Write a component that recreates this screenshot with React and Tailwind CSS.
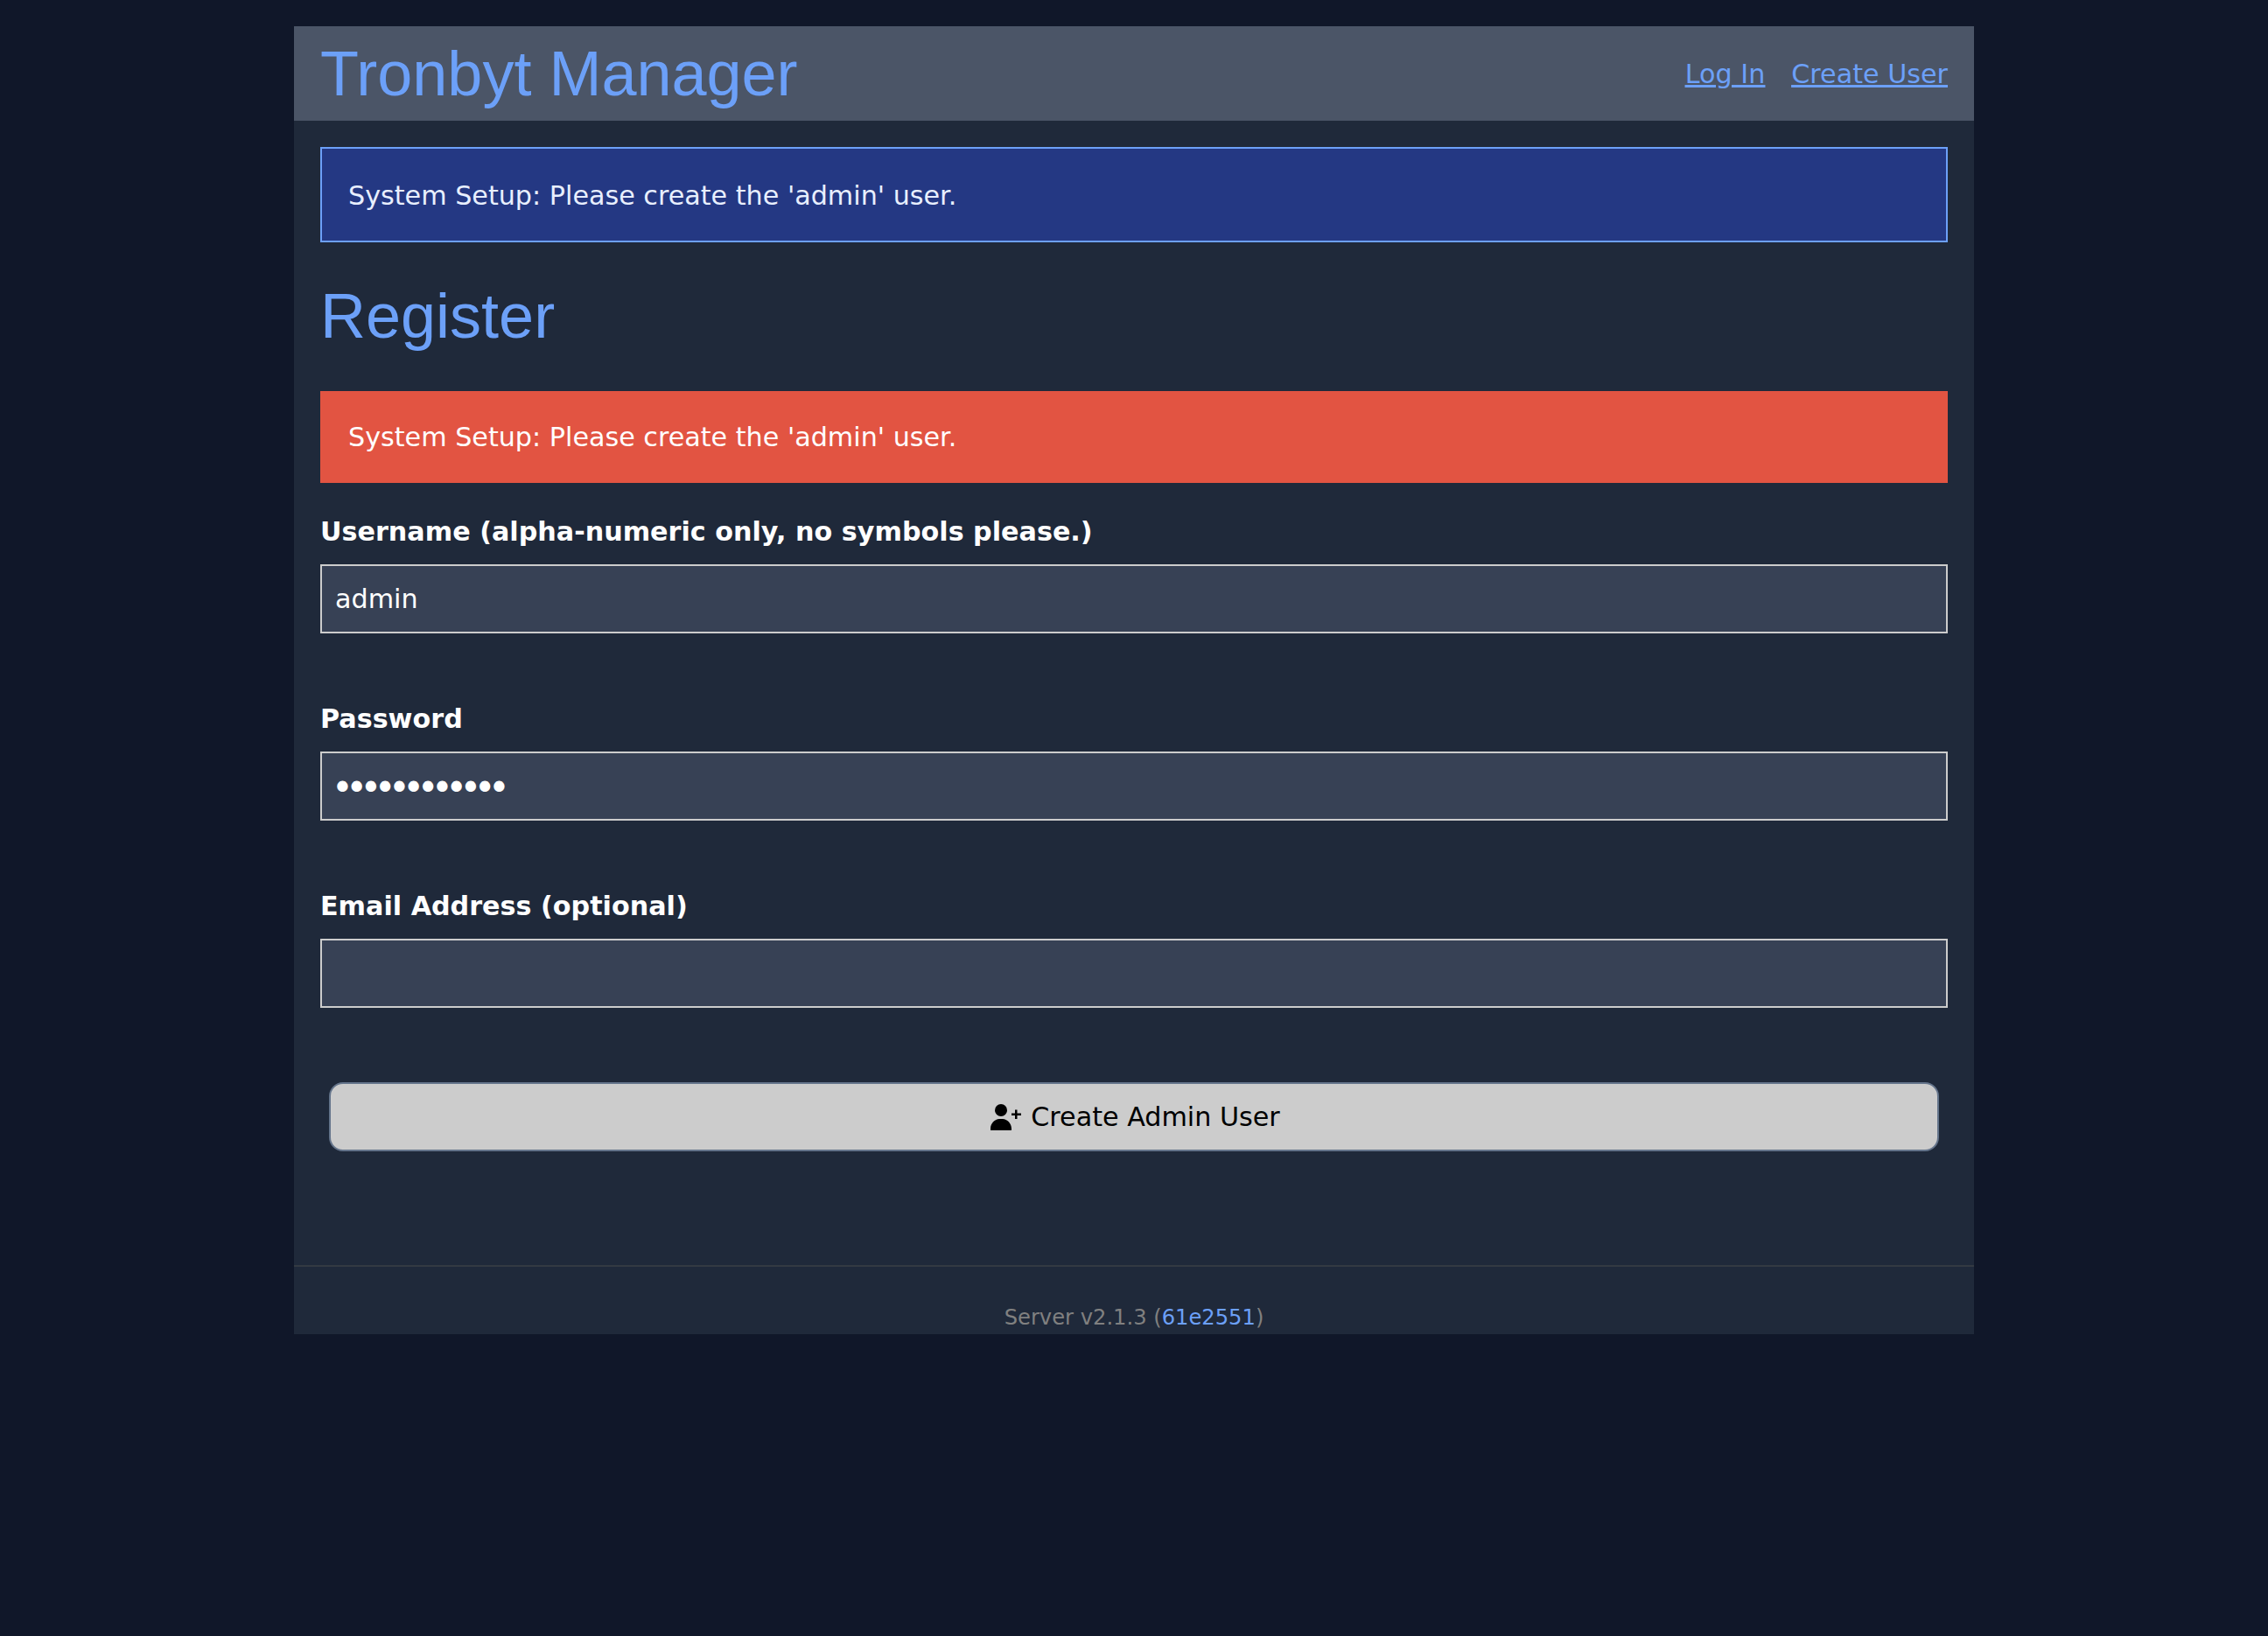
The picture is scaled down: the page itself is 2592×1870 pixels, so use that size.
import React from "react";

const body = "font-['DejaVu_Sans','Verdana',sans-serif]";
const heading = "font-['Liberation_Sans','Arial',sans-serif]";

function Field({ label, value, password }) {
  return (
    <div className="mb-[79px]">
      <label className="block h-[38px] mb-[18px] text-[30.2px] leading-[38px] font-bold text-white">{label}</label>
      <input
        type={password ? "password" : "text"}
        defaultValue={value}
        className={
          password
            ? `block h-[79px] w-full border-2 border-[#cccccc] bg-[#374155] pl-[11px] pt-[3px] text-[42px] tracking-[-8.5px] text-white outline-none ${body}`
            : `block h-[79px] w-full border-2 border-[#cccccc] bg-[#374155] px-[15px] text-[30.2px] text-white outline-none ${body}`
        }
      />
    </div>
  );
}

export default function App() {
  return (
    <div className={`min-h-[1870px] bg-[#101729] pt-[30px] ${body}`}>
      <div className="mx-auto w-[1920px] bg-[#1f293a]">
        <header className="flex h-[108px] items-center justify-between bg-[#4b5567] px-[30px]">
          <h1 className={`text-[72px] leading-[108px] font-normal text-[#6ca0f8] ${heading}`}>Tronbyt Manager</h1>
          <nav className="mt-[2px] flex gap-[30px] text-[30.2px] text-[#6ca0f8] underline">
            <a href="#">Log In</a>
            <a href="#">Create User</a>
          </nav>
        </header>

        <main className="px-[30px] pt-[30px]">
          <div className="flex h-[109px] items-center border-2 border-[#6ca0f8] bg-[#243883] px-[30px] pt-[2px] text-[30.2px] text-[#e8efff]">
            System Setup: Please create the 'admin' user.
          </div>
          <h2 className={`mt-[30px] h-[108px] text-[72px] leading-[108px] font-normal text-[#6ca0f8] ${heading}`}>Register</h2>
          <div className="mt-[32px] flex h-[105px] items-center bg-[#e25442] px-[32px] pt-[1px] text-[30.2px] text-white">
            System Setup: Please create the 'admin' user.
          </div>
          <form className="mt-[37px]">
            <Field label="Username (alpha-numeric only, no symbols please.)" value="admin" />
            <Field label="Password" value="adminadminad" password />
            <Field label="Email Address (optional)" />
            <div className="px-[10px] pt-[6px]">
              <button
                type="button"
                className="flex h-[79px] w-full items-center justify-center gap-[11px] rounded-[16px] border-2 border-[#64748b] bg-[#cccccc] pl-[3px] text-[30.2px] text-black"
              >
                <svg width="35" height="30" viewBox="0 0 35 30" fill="currentColor" aria-hidden="true">
                  <circle cx="12" cy="7" r="7" />
                  <path d="M0.5 30 c-0.8 0 -0.5 -1 -0.5 -2 c0 -6 5 -11 10 -11 h4 c5 0 10 5 10 11 c0 1 0.3 2 -0.5 2 z" />
                  <path d="M28 6.5 h2.5 v4 h4.5 v2.5 h-4.5 v4 h-2.5 v-4 h-4 v-2.5 h4 z" />
                </svg>
                <span>Create Admin User</span>
              </button>
            </div>
          </form>
        </main>

        <footer className="mt-[130px] h-[79px] border-t-2 border-[#333a42] pt-[40px] text-center text-[24.2px] leading-[36px] text-[#808080]">
          Server v2.1.3 (<a href="#" className="text-[#6ca0f8]">61e2551</a>)
        </footer>
      </div>
    </div>
  );
}
